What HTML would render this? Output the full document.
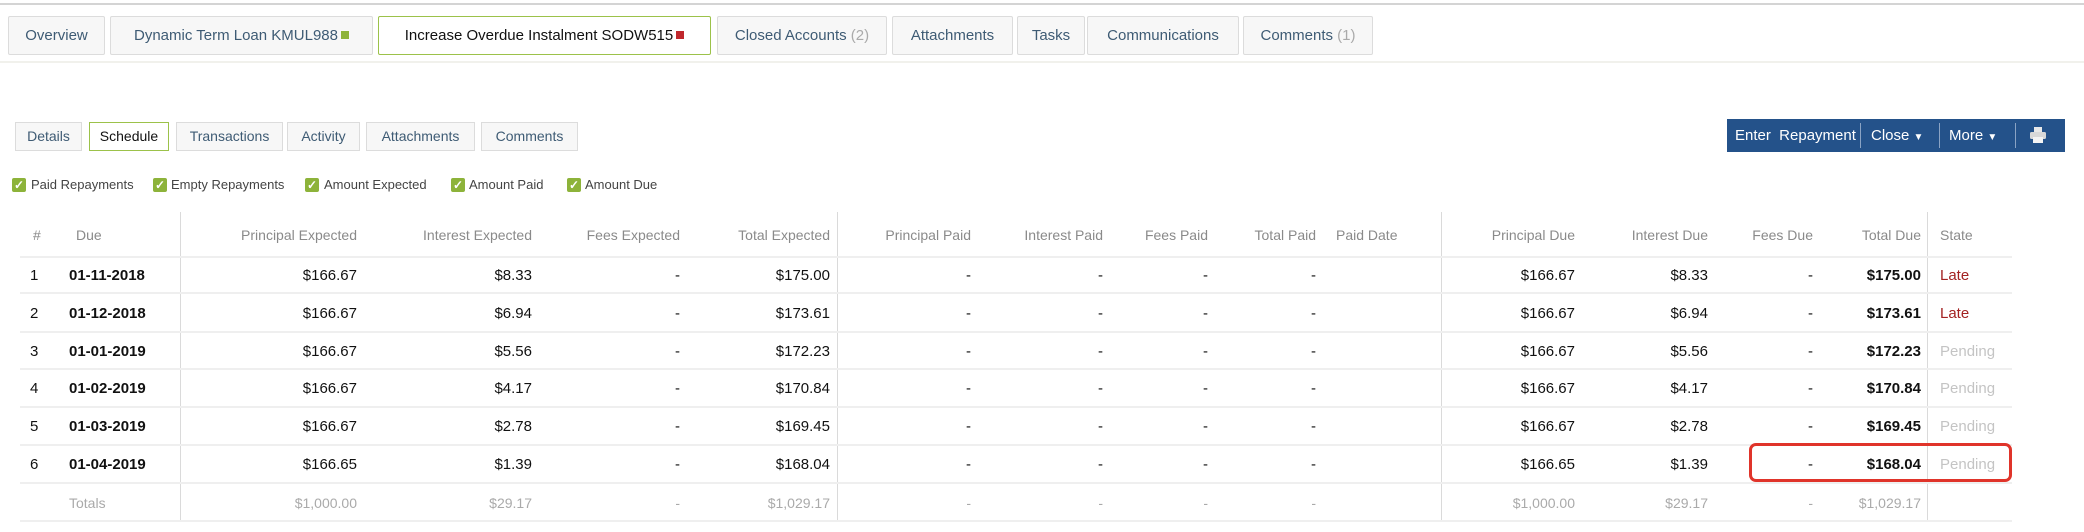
<!DOCTYPE html>
<html><head><meta charset="utf-8"><style>
*{box-sizing:border-box;margin:0;padding:0}
body{width:2084px;height:532px;background:#fff;font-family:"Liberation Sans",sans-serif;position:relative;overflow:hidden}
.a{position:absolute}
.topline{left:0;top:3px;width:2084px;height:2px;background:#d4d4d4}
.tab{position:absolute;top:16px;height:39px;line-height:37px;background:#f7f7f7;border:1px solid #dcdcdc;border-radius:2px;color:#3e5b74;font-size:15px;text-align:center;white-space:nowrap}
.tab.on{background:#fff;border:1.5px solid #9cc24a;color:#111}
.tab .g{color:#aaa}
.sq{display:inline-block;width:8px;height:8px;margin-left:3px;vertical-align:1px}
.sub{position:absolute;top:122px;height:29px;line-height:27px;background:#f7f7f7;border:1px solid #dcdcdc;color:#3e5b74;font-size:14px;text-align:center}
.sub.on{background:#fff;border:1.5px solid #9cc24a;color:#111}
.cb{position:absolute;top:178px;width:14px;height:14px;background:#8db33a;border-radius:2px;color:#fff;font-size:12px;line-height:14px;text-align:center;font-weight:bold}
.cl{position:absolute;top:177px;font-size:13px;color:#444;line-height:16px}
.btns{left:1727px;top:119px;width:338px;height:33px;background:#24528a;color:#fff;font-size:15px;line-height:33px}
.sep{position:absolute;top:4px;width:1px;height:25px;background:#8aa3c4}
.row{position:absolute;left:20px;width:1992px;height:38px;line-height:38px;font-size:15px;color:#111}
.row span{position:absolute;top:0;width:200px;text-align:right;white-space:nowrap}
.row span.l{text-align:left}
.hd{color:#8a8a8a;font-size:14px}
.hl{position:absolute;left:20px;width:1992px;height:2px;background:#efefef}
.vl{position:absolute;top:212px;width:1px;height:309px;background:#dadada}
.tot{color:#aaa}
.b{font-weight:bold}
.late{color:#a32222}
.pend{color:#c4c4c4}
</style></head><body>
<div class="a topline"></div>
<div class="tab" style="left:8px;width:97px">Overview</div>
<div class="tab" style="left:110px;width:263px">Dynamic Term Loan KMUL988<span class="sq" style="background:#8db33a"></span></div>
<div class="tab on" style="left:378px;width:333px">Increase Overdue Instalment SODW515<span class="sq" style="background:#c0282d"></span></div>
<div class="tab" style="left:717px;width:170px">Closed Accounts <span class="g">(2)</span></div>
<div class="tab" style="left:892px;width:121px">Attachments</div>
<div class="tab" style="left:1017px;width:68px">Tasks</div>
<div class="tab" style="left:1087px;width:152px">Communications</div>
<div class="tab" style="left:1243px;width:130px">Comments <span class="g">(1)</span></div>
<div class="a" style="left:0;top:61px;width:2084px;height:2px;background:#f1f1ec"></div>

<div class="sub" style="left:15px;width:67px">Details</div>
<div class="sub on" style="left:89px;width:80px">Schedule</div>
<div class="sub" style="left:176px;width:107px">Transactions</div>
<div class="sub" style="left:287px;width:73px">Activity</div>
<div class="sub" style="left:366px;width:109px">Attachments</div>
<div class="sub" style="left:481px;width:97px">Comments</div>

<div class="cb" style="left:12px">✓</div><div class="cl" style="left:31px">Paid Repayments</div>
<div class="cb" style="left:153px">✓</div><div class="cl" style="left:171px">Empty Repayments</div>
<div class="cb" style="left:305px">✓</div><div class="cl" style="left:324px">Amount Expected</div>
<div class="cb" style="left:451px">✓</div><div class="cl" style="left:469px">Amount Paid</div>
<div class="cb" style="left:567px">✓</div><div class="cl" style="left:585px">Amount Due</div>

<div class="a btns">
<span class="a" style="left:8px">Enter&nbsp; Repayment</span>
<div class="sep" style="left:133px"></div>
<span class="a" style="left:144px">Close <span style="font-size:10px">▼</span></span>
<div class="sep" style="left:212px"></div>
<span class="a" style="left:222px">More <span style="font-size:10px">▼</span></span>
<div class="sep" style="left:288px"></div>
<svg class="a" style="left:302px;top:7px" width="18" height="18" viewBox="0 0 18 18"><rect x="5" y="1" width="8" height="5" fill="#e8e8e8"/><rect x="1" y="6" width="16" height="7" rx="1.5" fill="#d8d8d8"/><rect x="4" y="11" width="10" height="6" fill="#f4f4f4"/></svg>
</div>

<div class="vl" style="left:180px"></div>
<div class="vl" style="left:837px"></div>
<div class="vl" style="left:1441px"></div>
<div class="vl" style="left:1927px"></div>

<div class="row hd" style="top:216px">
<span class="l" style="left:13px">#</span><span class="l" style="left:56px">Due</span>
<span style="left:137px">Principal Expected</span><span style="left:312px">Interest Expected</span><span style="left:460px">Fees Expected</span><span style="left:610px">Total Expected</span>
<span style="left:751px">Principal Paid</span><span style="left:883px">Interest Paid</span><span style="left:988px">Fees Paid</span><span style="left:1096px">Total Paid</span><span class="l" style="left:1316px">Paid Date</span>
<span style="left:1355px">Principal Due</span><span style="left:1488px">Interest Due</span><span style="left:1593px">Fees Due</span><span style="left:1701px">Total Due</span><span class="l" style="left:1920px">State</span>
</div>
<div class="hl" style="top:256px"></div>

<div class="row" style="top:257px"><span class="l" style="left:10px">1</span><span class="l b" style="left:49px">01-11-2018</span><span style="left:137px">$166.67</span><span style="left:312px">$8.33</span><span style="left:460px">-</span><span style="left:610px">$175.00</span><span style="left:751px">-</span><span style="left:883px">-</span><span style="left:988px">-</span><span style="left:1096px">-</span><span style="left:1355px">$166.67</span><span style="left:1488px">$8.33</span><span style="left:1593px">-</span><span class="b" style="left:1701px">$175.00</span><span class="l late" style="left:1920px">Late</span></div>
<div class="hl" style="top:292px"></div>
<div class="row" style="top:295px"><span class="l" style="left:10px">2</span><span class="l b" style="left:49px">01-12-2018</span><span style="left:137px">$166.67</span><span style="left:312px">$6.94</span><span style="left:460px">-</span><span style="left:610px">$173.61</span><span style="left:751px">-</span><span style="left:883px">-</span><span style="left:988px">-</span><span style="left:1096px">-</span><span style="left:1355px">$166.67</span><span style="left:1488px">$6.94</span><span style="left:1593px">-</span><span class="b" style="left:1701px">$173.61</span><span class="l late" style="left:1920px">Late</span></div>
<div class="hl" style="top:331px"></div>
<div class="row" style="top:333px"><span class="l" style="left:10px">3</span><span class="l b" style="left:49px">01-01-2019</span><span style="left:137px">$166.67</span><span style="left:312px">$5.56</span><span style="left:460px">-</span><span style="left:610px">$172.23</span><span style="left:751px">-</span><span style="left:883px">-</span><span style="left:988px">-</span><span style="left:1096px">-</span><span style="left:1355px">$166.67</span><span style="left:1488px">$5.56</span><span style="left:1593px">-</span><span class="b" style="left:1701px">$172.23</span><span class="l pend" style="left:1920px">Pending</span></div>
<div class="hl" style="top:368px"></div>
<div class="row" style="top:370px"><span class="l" style="left:10px">4</span><span class="l b" style="left:49px">01-02-2019</span><span style="left:137px">$166.67</span><span style="left:312px">$4.17</span><span style="left:460px">-</span><span style="left:610px">$170.84</span><span style="left:751px">-</span><span style="left:883px">-</span><span style="left:988px">-</span><span style="left:1096px">-</span><span style="left:1355px">$166.67</span><span style="left:1488px">$4.17</span><span style="left:1593px">-</span><span class="b" style="left:1701px">$170.84</span><span class="l pend" style="left:1920px">Pending</span></div>
<div class="hl" style="top:406px"></div>
<div class="row" style="top:408px"><span class="l" style="left:10px">5</span><span class="l b" style="left:49px">01-03-2019</span><span style="left:137px">$166.67</span><span style="left:312px">$2.78</span><span style="left:460px">-</span><span style="left:610px">$169.45</span><span style="left:751px">-</span><span style="left:883px">-</span><span style="left:988px">-</span><span style="left:1096px">-</span><span style="left:1355px">$166.67</span><span style="left:1488px">$2.78</span><span style="left:1593px">-</span><span class="b" style="left:1701px">$169.45</span><span class="l pend" style="left:1920px">Pending</span></div>
<div class="hl" style="top:444px"></div>
<div class="row" style="top:446px"><span class="l" style="left:10px">6</span><span class="l b" style="left:49px">01-04-2019</span><span style="left:137px">$166.65</span><span style="left:312px">$1.39</span><span style="left:460px">-</span><span style="left:610px">$168.04</span><span style="left:751px">-</span><span style="left:883px">-</span><span style="left:988px">-</span><span style="left:1096px">-</span><span style="left:1355px">$166.65</span><span style="left:1488px">$1.39</span><span style="left:1593px">-</span><span class="b" style="left:1701px">$168.04</span><span class="l pend" style="left:1920px">Pending</span></div>
<div class="hl" style="top:482px"></div>
<div class="row tot" style="top:484px;font-size:14px"><span class="l" style="left:49px">Totals</span><span style="left:137px">$1,000.00</span><span style="left:312px">$29.17</span><span style="left:460px">-</span><span style="left:610px">$1,029.17</span><span style="left:751px">-</span><span style="left:883px">-</span><span style="left:988px">-</span><span style="left:1096px">-</span><span style="left:1355px">$1,000.00</span><span style="left:1488px">$29.17</span><span style="left:1593px">-</span><span style="left:1701px">$1,029.17</span></div>
<div class="hl" style="top:520px"></div>

<div class="a" style="left:1749px;top:443px;width:263px;height:39px;border:3px solid #e0342a;border-radius:7px"></div>
</body></html>
